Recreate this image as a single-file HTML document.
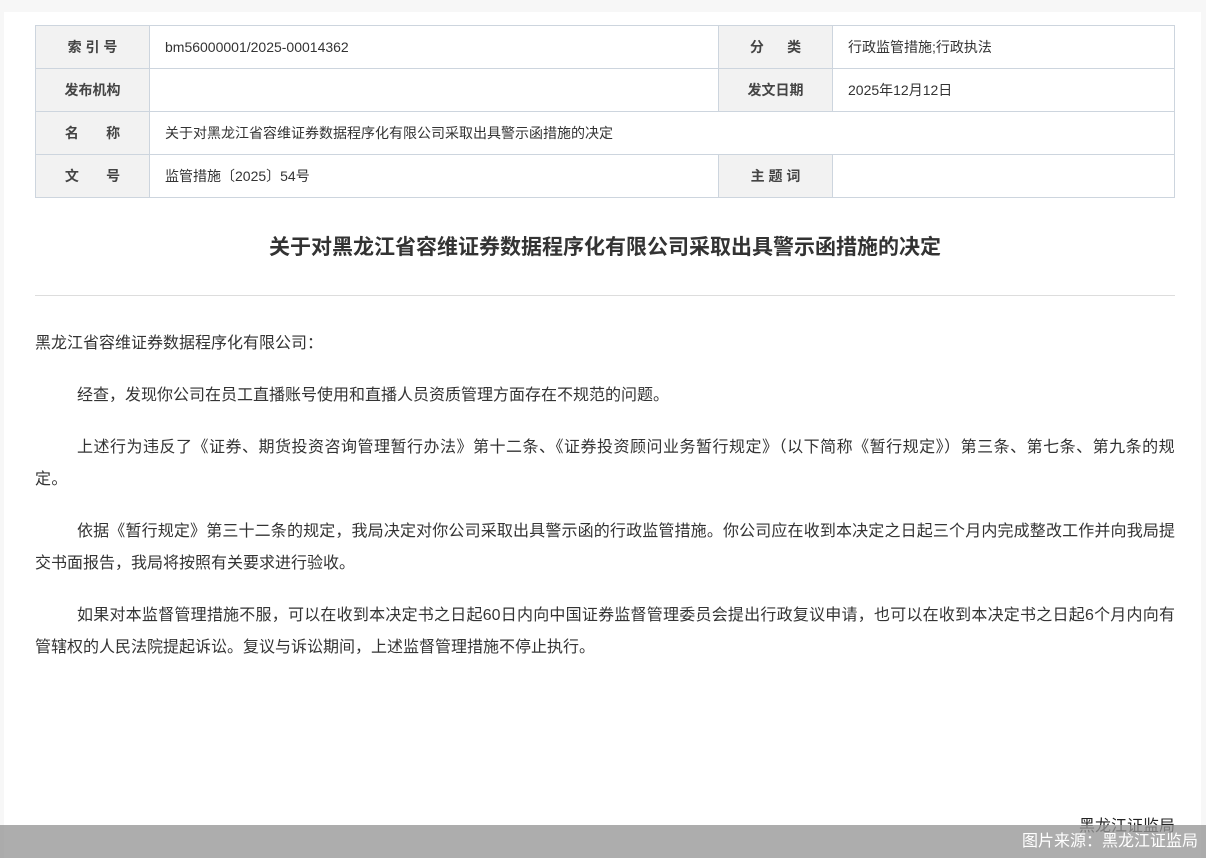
<!DOCTYPE html>
<html><head><meta charset="utf-8"><style>
*{margin:0;padding:0;box-sizing:border-box}
html,body{width:1206px;height:858px;overflow:hidden;background:#f7f7f7;font-family:"Liberation Sans","Noto Sans CJK SC",sans-serif;color:#333}
.page{position:absolute;left:4px;top:12px;width:1197px;height:846px;background:#fff}
table{position:absolute;left:35px;top:25px;border-collapse:collapse;width:1140px;font-size:14px}
td{border:1px solid #cdd5de;height:43px;padding:0 15px;color:#333}
td.l{background:#f2f2f2;font-weight:bold;text-align:center;color:#444;padding:0}
h1{position:absolute;left:35px;width:1140px;top:233px;text-align:center;font-size:21px;font-weight:bold;color:#333;line-height:30px}
.hr{position:absolute;left:35px;width:1140px;top:295px;border-top:1px solid #ddd}
.body{position:absolute;left:35px;width:1140px;top:328px;font-size:16px;line-height:32px;color:#333;font-feature-settings:"chws" 0,"halt" 0}
.body p{margin-bottom:20px;text-align:justify}
.body p.i{text-indent:42px}
.sig{position:absolute;right:31px;top:815px;font-size:16px;color:#222;line-height:24px}
.bar{position:absolute;left:0;top:825px;width:1206px;height:33px;background:rgba(150,150,150,.78)}
.cap{position:absolute;right:8px;top:830px;font-size:16px;color:#fff;line-height:24px}
</style></head><body>
<div class="page"></div>
<table>
<tr><td class="l" style="width:114px">索&nbsp;引&nbsp;号</td><td style="width:569px">bm56000001/2025-00014362</td><td class="l" style="width:114px">分&nbsp;&nbsp;&nbsp;&nbsp;&nbsp;&nbsp;类</td><td>行政监管措施;行政执法</td></tr>
<tr><td class="l">发布机构</td><td></td><td class="l">发文日期</td><td>2025年12月12日</td></tr>
<tr><td class="l">名&nbsp;&nbsp;&nbsp;&nbsp;&nbsp;&nbsp;&nbsp;称</td><td colspan="3">关于对黑龙江省容维证券数据程序化有限公司采取出具警示函措施的决定</td></tr>
<tr><td class="l">文&nbsp;&nbsp;&nbsp;&nbsp;&nbsp;&nbsp;&nbsp;号</td><td>监管措施〔2025〕54号</td><td class="l">主&nbsp;题&nbsp;词</td><td></td></tr>
</table>
<h1>关于对黑龙江省容维证券数据程序化有限公司采取出具警示函措施的决定</h1>
<div class="hr"></div>
<div class="body">
<p>黑龙江省容维证券数据程序化有限公司：</p>
<p class="i">经查，发现你公司在员工直播账号使用和直播人员资质管理方面存在不规范的问题。</p>
<p class="i" style="letter-spacing:0.4px">上述行为违反了《证券、期货投资咨询管理暂行办法》第十二条、《证券投资顾问业务暂行规定》（以下简称《暂行规定》）第三条、第七条、第九条的规定。</p>
<p class="i">依据《暂行规定》第三十二条的规定，我局决定对你公司采取出具警示函的行政监管措施。你公司应在收到本决定之日起三个月内完成整改工作并向我局提交书面报告，我局将按照有关要求进行验收。</p>
<p class="i">如果对本监督管理措施不服，可以在收到本决定书之日起60日内向中国证券监督管理委员会提出行政复议申请，也可以在收到本决定书之日起6个月内向有管辖权的人民法院提起诉讼。复议与诉讼期间，上述监督管理措施不停止执行。</p>
</div>
<div class="sig">黑龙江证监局</div>
<div class="bar"></div>
<div class="cap">图片来源：黑龙江证监局</div>
</body></html>
